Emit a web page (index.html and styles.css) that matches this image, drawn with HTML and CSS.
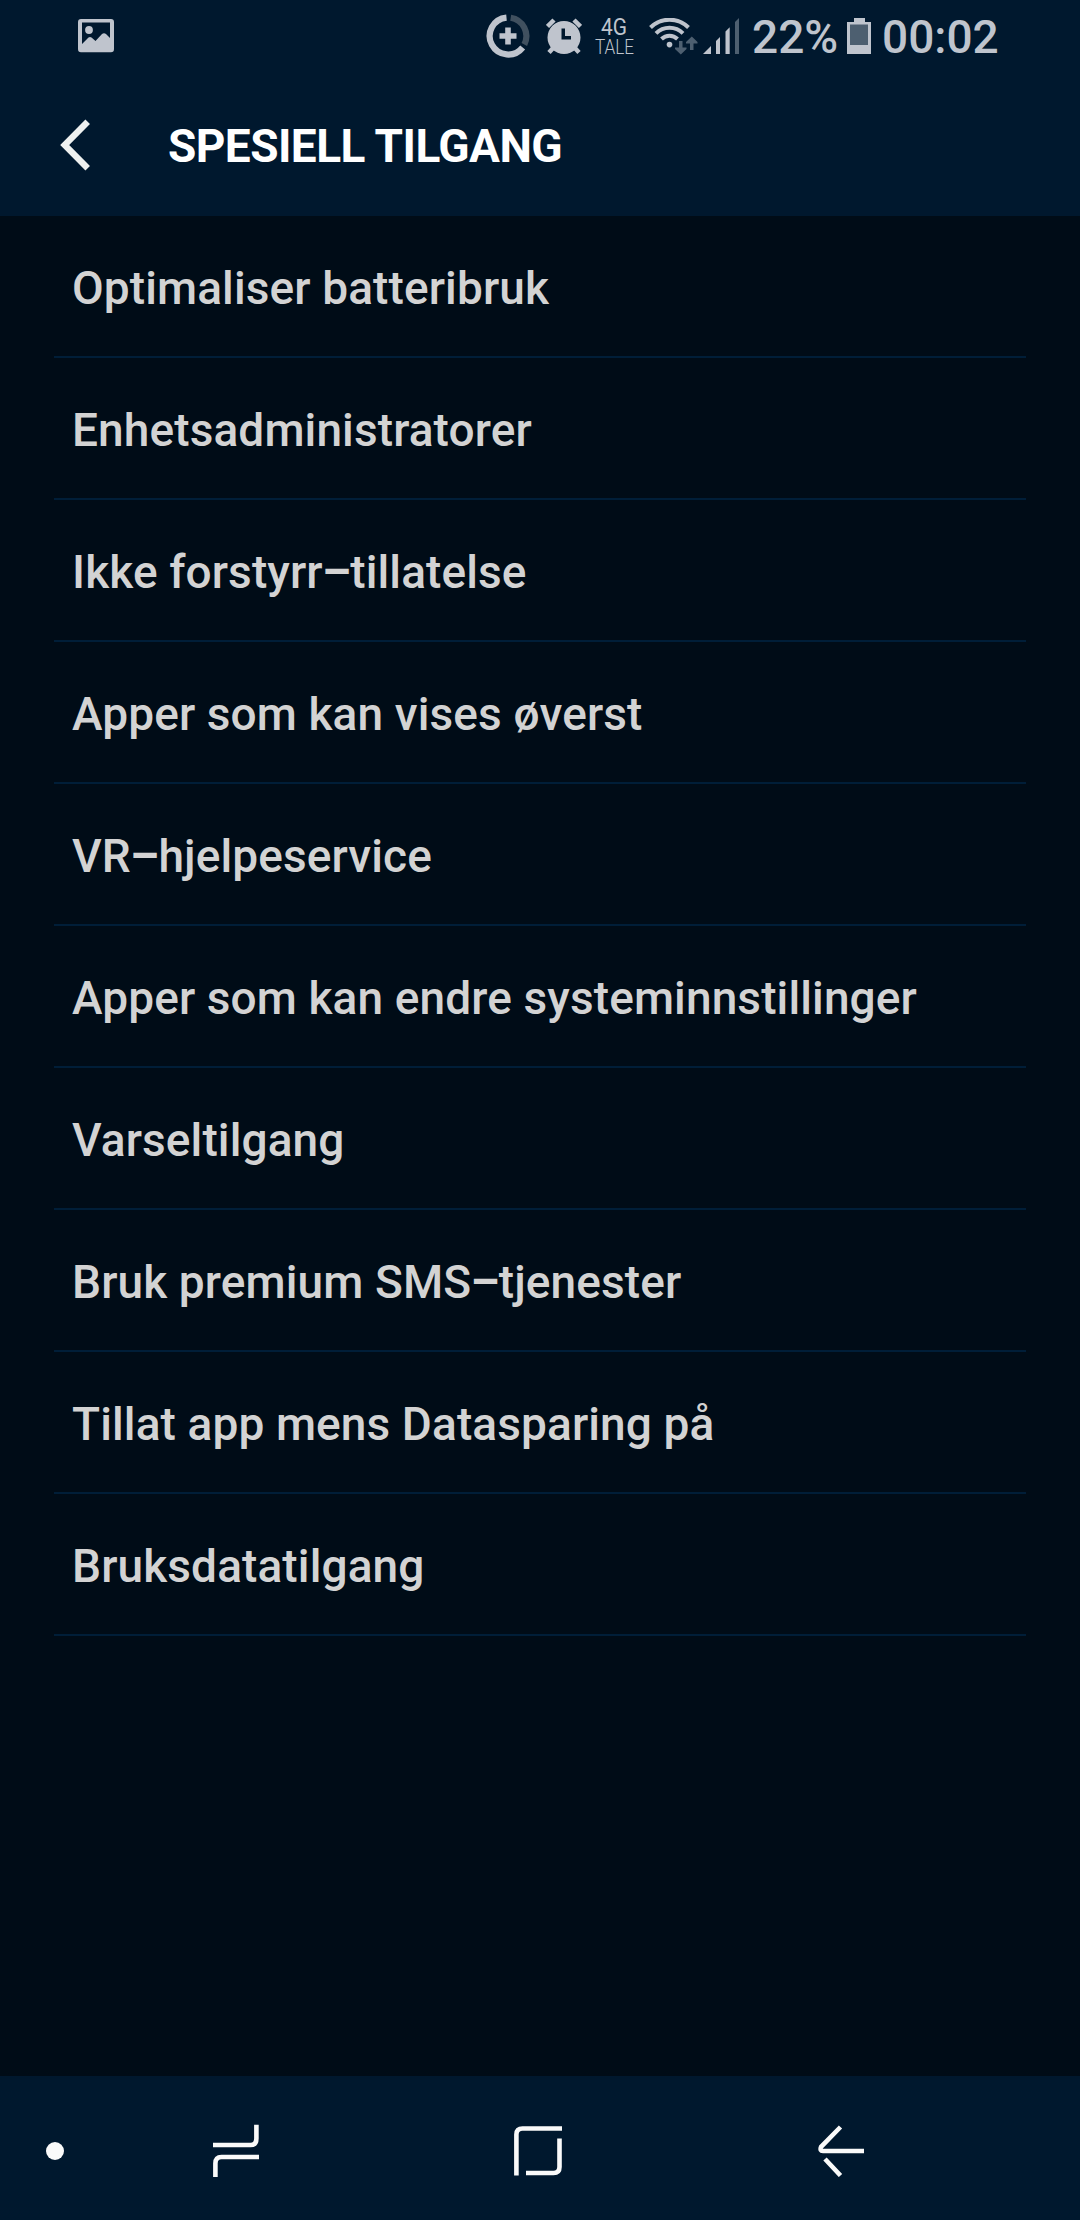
FILE: index.html
```html
<!DOCTYPE html>
<html lang="nb">
<head>
<meta charset="utf-8">
<title>Spesiell tilgang</title>
<link rel="stylesheet" href="styles.css">
</head>
<body>
<div class="screen">
  <header class="top">
    <div class="status">
      <svg class="icon-picture" width="36" height="34" viewBox="0 0 36 34"><path fill="currentColor" fill-rule="evenodd" d="M3 0H33Q36 0 36 3V30Q36 33.3 33 33.3H3Q0 33.3 0 30V3Q0 0 3 0ZM4 3.6V25L10.500 18.600Q12 17.600 13.500 18.600L17.500 22L24 15Q26 13.600 28 15L32 19V3.600Z"/><circle cx="11" cy="11" r="3.900" fill="currentColor"/></svg>
      <svg class="icon-saver" width="44" height="44" viewBox="0 0 44 44"><g fill="none" stroke-width="6.200"><path class="dim-line" d="M24.700 3.800A18.500 18.500 0 0 1 38.300 30.500"/><path stroke="currentColor" d="M20.500 3.600A18.500 18.500 0 1 0 36.700 33.500"/><path stroke="currentColor" stroke-width="5.600" d="M13.500 22H30.500M22 13.500V30.500"/></g></svg>
      <svg class="icon-alarm" width="36" height="37" viewBox="0 0 36 37"><g fill="none" stroke="currentColor" stroke-width="4.500"><path d="M1.500 8.500L8 2M28 2L34.500 8.500M8 29L3 34.500M28 29L33 34.500"/></g><path fill="currentColor" fill-rule="evenodd" d="M18 3A16.500 16.500 0 0 1 18 36A16.500 16.500 0 0 1 18 3ZM15.500 10.500V21.500H25V18H19V10.500Z"/></svg>
      <svg class="carrier" width="40" height="54" viewBox="0 0 40 54"><text class="carrier-type" x="6" y="26.500" textLength="26" lengthAdjust="spacingAndGlyphs">4G</text><text class="carrier-name" x="0" y="46" textLength="39" lengthAdjust="spacingAndGlyphs">TALE</text></svg>
      <svg class="icon-wifi" width="50" height="37" viewBox="0 0 50 37"><g fill="none" stroke="currentColor" stroke-width="4"><path d="M1.500 9.500A27 27 0 0 1 39.500 9.500"/><path d="M7 15.300A19 19 0 0 1 34 15.300"/><path d="M12.500 21A11.500 11.500 0 0 1 28.500 21"/></g><circle cx="20.500" cy="26.600" r="2.800" fill="currentColor"/><path class="dim" d="M30 23H33.500V29.500H37.500V31L31.800 36.500L26 31V29.500H30ZM41 32V25.500H37V24L42.800 18.500L48.500 24V25.500H44.500V32Z"/></svg>
      <svg class="icon-signal" width="37" height="37" viewBox="0 0 37 37"><path fill="currentColor" d="M0 36L8 28V36ZM13 23L17 19V36H13ZM22.500 13.500L26.700 9.300V36H22.500Z"/><path class="dim" d="M32 4L36 0V36H32Z"/></svg>
      <span class="percent">22%</span>
      <svg class="icon-battery" width="24" height="36" viewBox="0 0 24 36"><path fill="currentColor" d="M7 0H18V4H24V36H0V4H7Z"/><path class="dim" d="M3 6.500H21V27H3Z"/></svg>
      <span class="clock">00:02</span>
    </div>
    <div class="titlebar">
      <svg class="icon-up" width="32" height="52" viewBox="0 0 32 52"><path fill="none" stroke="currentColor" stroke-width="6.400" d="M27.700 2.800L4.700 26L27.700 49.200"/></svg>
      <h1 class="title">SPESIELL TILGANG</h1>
    </div>
  </header>
  <ul class="list">
    <li class="row"><span>Optimaliser batteribruk</span></li>
    <li class="row"><span>Enhetsadministratorer</span></li>
    <li class="row"><span>Ikke forstyrr<span class="dash">–</span>tillatelse</span></li>
    <li class="row"><span>Apper som kan vises øverst</span></li>
    <li class="row"><span>VR<span class="dash">–</span>hjelpeservice</span></li>
    <li class="row"><span>Apper som kan endre systeminnstillinger</span></li>
    <li class="row"><span>Varseltilgang</span></li>
    <li class="row"><span>Bruk premium SMS<span class="dash">–</span>tjenester</span></li>
    <li class="row"><span>Tillat app mens Datasparing på</span></li>
    <li class="row"><span>Bruksdatatilgang</span></li>
  </ul>
  <nav class="navbar">
    <span class="nav-dot"></span>
    <svg class="nav-recents" width="46" height="54" viewBox="0 0 46 54"><path fill="none" stroke="currentColor" stroke-width="4.600" d="M0 21H37.500Q43.400 21 43.400 14.500V0.700M46 33H8.500Q2.400 33 2.400 39.500V53"/></svg>
    <svg class="nav-home" width="48" height="50" viewBox="0 0 48 50"><path fill="none" stroke="currentColor" stroke-width="4.600" d="M2.400 49.500V8.500Q2.400 2.500 8.500 2.500H48M45.500 12.500V41Q45.500 47 39.500 47H12"/></svg>
    <svg class="nav-back" width="46" height="52" viewBox="0 0 46 52"><path fill="none" stroke="currentColor" stroke-width="4.600" d="M22.500 2L3.100 21.800Q1.500 26 5 26H46M7 34L22.500 50.500"/></svg>
  </nav>
</div>
</body>
</html>
```
FILE: styles.css
```css
* { box-sizing: border-box; }

body {
  margin: 0;
  background: #000c17;
  font-family: Roboto, "Liberation Sans", sans-serif;
}

svg { display: block; flex: none; }

.screen {
  display: flex;
  flex-direction: column;
  width: 1080px;
  height: 2220px;
}

.top {
  height: 216px;
  background: #00182e;
}

.status {
  display: flex;
  align-items: flex-start;
  height: 72px;
  padding: 18px 0 0 78px;
  color: #bfc4cd;
  font-size: 46px;
  font-weight: 500;
  line-height: 54px;
}

.dim { fill: #4d5f70; }
.dim-line { stroke: #40505f; }

.icon-picture { margin-top: 1px; }
.icon-saver { margin: -4px 0 0 372px; }
.icon-alarm { margin-left: 16px; }
.carrier { margin: -10px 0 0 13px; overflow: visible; }
.icon-wifi { margin-left: 14px; }
.icon-signal { margin-left: 4px; }
.icon-battery { margin-left: 8px; }

.carrier text { fill: currentColor; }
.carrier-type { font-size: 23px; font-weight: 400; }
.carrier-name { font-size: 20px; font-weight: 300; }

.percent,
.clock {
  margin-top: -8px;
  white-space: nowrap;
}

.percent { width: 87px; margin-left: 12px; }
.clock { margin-left: 11px; }

.titlebar {
  display: flex;
  align-items: center;
  height: 144px;
  padding: 0 60px;
  color: #eef0ef;
}

.icon-up { margin-top: 1px; }

.title {
  margin: 3px 0 0 76px;
  color: #fff;
  font-size: 46px;
  font-weight: 700;
  line-height: 54px;
  letter-spacing: -0.55px;
  white-space: nowrap;
}

.list {
  flex: 1;
  margin: 0;
  padding: 0 54px;
  list-style: none;
}

.row {
  display: flex;
  align-items: center;
  height: 142px;
  padding: 4px 18px 0;
  border-bottom: 2px solid #001e38;
  color: #d3d3d3;
  font-size: 46px;
  font-weight: 500;
  line-height: 54px;
  letter-spacing: 0.11px;
  white-space: nowrap;
}

.dash {
  margin: 0 -0.8px;
  font-weight: 700;
}

.navbar {
  display: flex;
  align-items: center;
  height: 144px;
  padding-left: 46px;
  background: #00182e;
  color: #fafafa;
}

.nav-dot {
  width: 18px;
  height: 18px;
  margin-top: 6px;
  border-radius: 50%;
  background: currentColor;
}

.nav-recents { margin: 6px 0 0 149px; }
.nav-home { margin: 6px 0 0 255px; }
.nav-back { margin: 6px 0 0 256px; }
```
